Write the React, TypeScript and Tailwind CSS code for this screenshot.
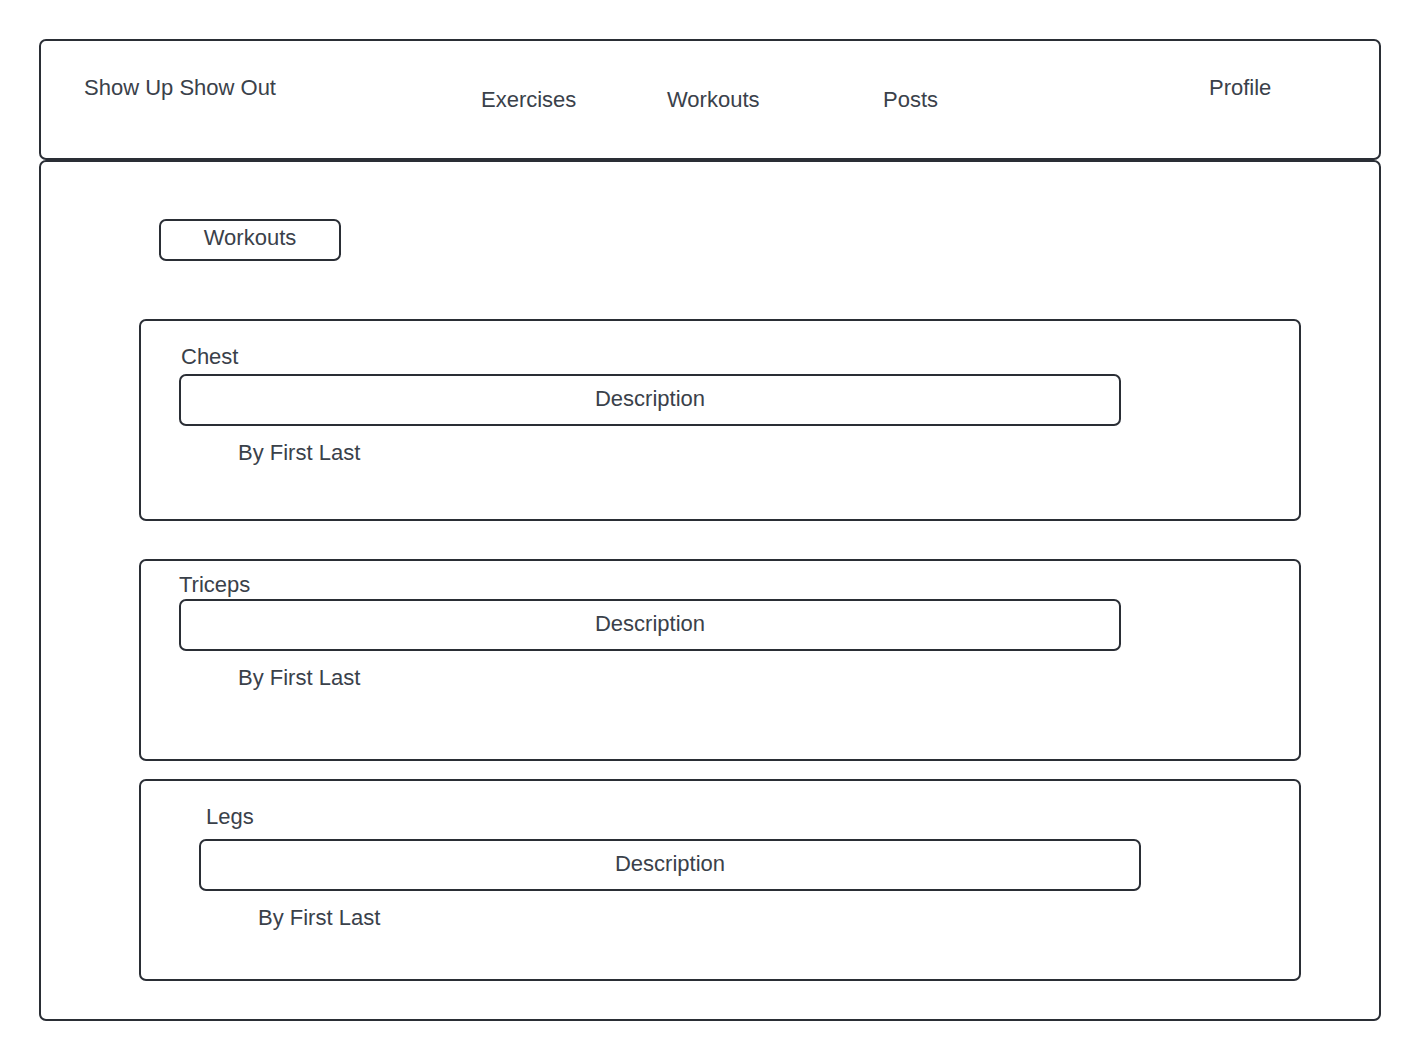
import React from "react";

type CardProps = {
  title: string;
  titleTop: string;
  titleLeft: string;
  titleGap: string;
  boxLeft: string;
};

function Card({ title, titleTop, titleLeft, titleGap, boxLeft }: CardProps) {
  return (
    <div className="w-[1162px] h-[202px] border-2 border-[#2a2e35] rounded-[7px] flex flex-col">
      <div className={`${titleTop} ${titleLeft} h-[26px] leading-[26px]`}>{title}</div>
      <div
        className={`${titleGap} ${boxLeft} w-[942px] h-[52px] border-2 border-[#2a2e35] rounded-[7px] flex items-center justify-center pb-[4px]`}
      >
        Description
      </div>
      <div className={`mt-[14px] ${boxLeft} pl-[59px] h-[26px] leading-[26px]`}>By First Last</div>
    </div>
  );
}

export default function App() {
  return (
    <div
      className="w-[1420px] h-[1060px] bg-white pt-[39px] pl-[39px] text-[22px] text-[#3a414a]"
      style={{ fontFamily: '"Liberation Sans", Arial, sans-serif' }}
    >
      <header className="w-[1342px] h-[121px] border-2 border-[#2a2e35] rounded-[7px] flex items-start">
        <div className="ml-[43px] w-[397px] mt-[34px] h-[26px] leading-[26px]">Show Up Show Out</div>
        <div className="w-[186px] mt-[46px] h-[26px] leading-[26px]">Exercises</div>
        <div className="w-[216px] mt-[46px] h-[26px] leading-[26px]">Workouts</div>
        <div className="w-[326px] mt-[46px] h-[26px] leading-[26px]">Posts</div>
        <div className="mt-[34px] h-[26px] leading-[26px]">Profile</div>
      </header>
      <main className="w-[1342px] h-[861px] border-2 border-[#2a2e35] rounded-[7px] flex flex-col">
        <div className="ml-[118px] mt-[57px] w-[182px] h-[42px] border-2 border-[#2a2e35] rounded-[7px] flex items-center justify-center pb-[5px]">
          Workouts
        </div>
        <div className="ml-[98px] mt-[58px] flex flex-col">
          <Card title="Chest" titleTop="mt-[23px]" titleLeft="ml-[40px]" titleGap="mt-[4px]" boxLeft="ml-[38px]" />
          <div className="mt-[38px]">
            <Card title="Triceps" titleTop="mt-[11px]" titleLeft="ml-[38px]" titleGap="mt-[1px]" boxLeft="ml-[38px]" />
          </div>
          <div className="mt-[18px]">
            <Card title="Legs" titleTop="mt-[23px]" titleLeft="ml-[65px]" titleGap="mt-[9px]" boxLeft="ml-[58px]" />
          </div>
        </div>
      </main>
    </div>
  );
}
